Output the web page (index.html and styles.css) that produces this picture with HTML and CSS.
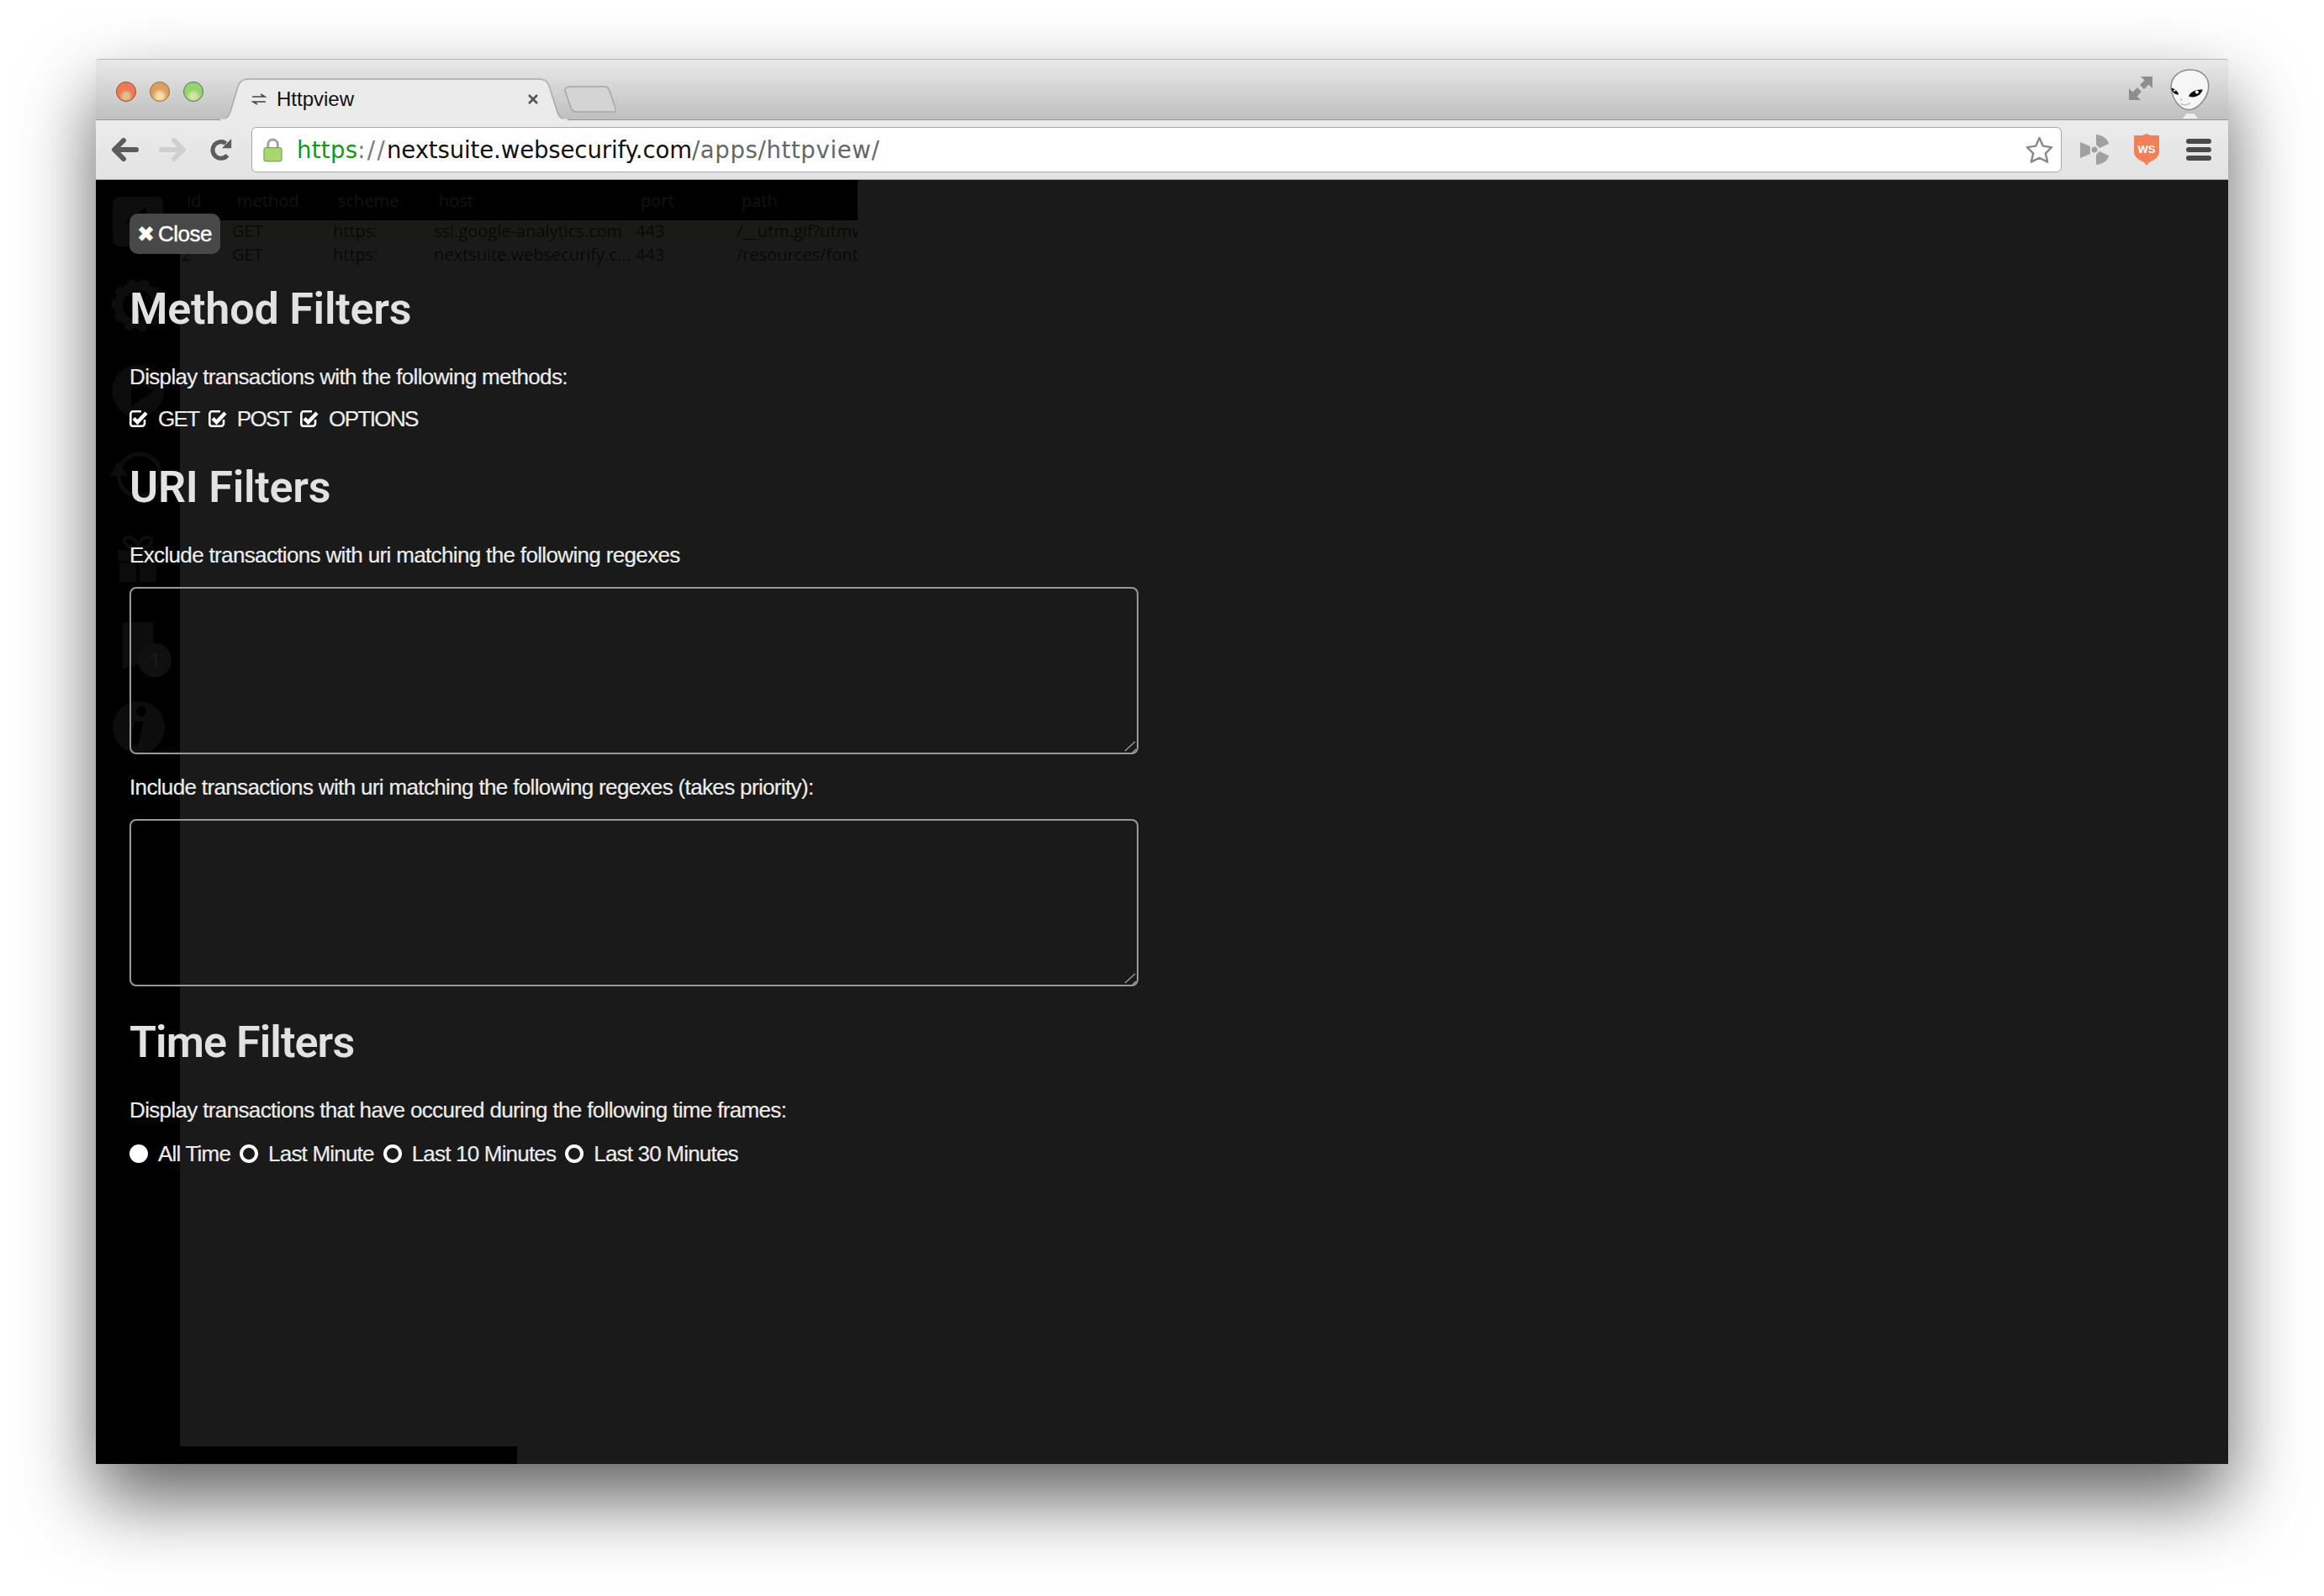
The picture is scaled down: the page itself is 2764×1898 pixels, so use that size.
FILE: index.html
```html
<!DOCTYPE html>
<html lang="en">
<head>
<meta charset="utf-8">
<title>Httpview</title>
<link rel="stylesheet" href="styles.css">
</head>
<body>
<div class="window">
  <header class="titlebar">
    <div class="lights">
      <span class="light light-red"></span>
      <span class="light light-amber"></span>
      <span class="light light-green"></span>
    </div>
    <div class="tabs">
      <div class="tab">
        <svg class="tab-shape" viewBox="0 0 415 50"><path d="M0 50C7 50 11 46 13 40L22 10C24 3 29 1 35 1H380C386 1 390 3 392 9L402 41C404 47 408 50 415 50Z" fill="#ebebeb" stroke="#a9a9a9" stroke-width="1.5"/><path d="M1 50H414" stroke="#ebebeb" stroke-width="3"/></svg>
        <svg class="tab-favicon" viewBox="0 0 18 14"><path d="M1 4H15M11 1L16 4H1M17 10H3M7 13L2 10H17" fill="none" stroke="#444" stroke-width="1.6"/></svg>
        <span class="tab-title">Httpview</span>
        <svg class="tab-close" viewBox="0 0 14 14"><path d="M2 2L12 12M12 2L2 12" stroke="#555" stroke-width="2.6"/></svg>
      </div>
      <svg class="new-tab" viewBox="0 0 64 32"><path d="M10 1H50C53 1 55 3 56 6L63 27C64 30 62 31 60 31H17C13 31 11 29 10 26L3 6C2 3 5 1 10 1Z" fill="#d4d4d4" stroke="#a5a5a5" stroke-width="1.4"/></svg>
    </div>
    <div class="title-right">
      <svg class="fullscreen" viewBox="0 0 28 28"><path d="M14 0H28V14L23.500 9.500L18 15L13 10L18.500 4.500ZM0 14V28H14L9.500 23.500L15 18L10 13L4.500 18.500Z" fill="#8e8e8e"/></svg>
      <svg class="alien" viewBox="0 0 50 62"><path d="M20 54L16 60H34L30 54Z" fill="#eee"/><path d="M25 1C39 1 48 10 47 23C46 34 36 47 26 49C20 50 13 47 8 40C3 33 1 24 2 18C4 8 13 1 25 1Z" fill="#f6f6f6" stroke="#8a8a8a" stroke-width="1.5"/><path d="M2 23C6 23 10 27 11 31C6 31 3 28 2 23Z" fill="#0c0c0c"/><path d="M40 25C34 24 25 27 23 33C30 36 38 32 40 25Z" fill="#0c0c0c"/><circle cx="33" cy="28" r="2" fill="#fff"/><circle cx="6" cy="26" r="1.200" fill="#fff"/><path d="M13 42C17 44 22 44 25 41" fill="none" stroke="#bbb" stroke-width="1.500"/><circle cx="14" cy="37" r="1.400" fill="#ccc"/></svg>
    </div>
  </header>
  <nav class="toolbar">
    <svg class="nav nav-back" viewBox="0 0 32 28"><path d="M14 3L3 14L14 25M4 14H29" fill="none" stroke="#5c5c5c" stroke-width="6" stroke-linecap="round" stroke-linejoin="round"/></svg>
    <svg class="nav nav-forward" viewBox="0 0 32 28"><path d="M18 3L29 14L18 25M28 14H3" fill="none" stroke="#cfcfcf" stroke-width="6" stroke-linecap="round" stroke-linejoin="round"/></svg>
    <svg class="nav nav-reload" viewBox="0 0 30 30"><path d="M23 22A10.500 10.500 0 1 1 21 7" fill="none" stroke="#5c5c5c" stroke-width="5.500"/><path d="M16 13L28 13L28 1Z" fill="#5c5c5c"/></svg>
    <div class="omnibox">
      <svg class="lock" viewBox="0 0 24 30"><path d="M6 13V8C6 4 9 2 12 2S18 4 18 8V13" fill="none" stroke="#a0a0a0" stroke-width="3"/><rect x="1" y="12" width="22" height="17" rx="2" fill="#a9d66e" stroke="#6f8f4b"/></svg>
      <span class="url"><span class="url-scheme">https</span><span class="url-sep">://</span><span class="url-host">nextsuite.websecurify.com</span><span class="url-path">/apps/httpview/</span></span>
      <svg class="star" viewBox="0 0 36 36"><path d="M18 3L22.500 13L33 14.500L25.500 22L28 32.500L18 27.500L8 32.500L10.500 22L3 14.500L13.500 13Z" fill="#fff" stroke="#8a8a8a" stroke-width="2.500" stroke-linejoin="round"/></svg>
    </div>
    <svg class="ext ext-radio" viewBox="0 0 36 38"><path d="M1 10L13 15V24L1 29ZM20 1C28 2 34 6 35 12L24 17L20 13ZM20 37C28 36 34 32 35 26L24 21L20 25Z" fill="#a0a0a0"/><circle cx="18" cy="19" r="3.500" fill="#a0a0a0"/></svg>
    <svg class="ext ext-ws" viewBox="0 0 32 38"><path d="M16 0L21 2H31V22C31 28 24 32 19 34L16 38L13 34C8 32 1 28 1 22V2H11Z" fill="#f08058"/><text class="ws-label" x="16" y="23" text-anchor="middle">WS</text></svg>
    <div class="menu"><span class="menu-bar"></span><span class="menu-bar"></span><span class="menu-bar"></span></div>
  </nav>
  <main class="content">
    <div class="ghost">
      <aside class="ghost-side">
        <svg class="ghost-icons" viewBox="0 0 100 700">
          <rect x="20" y="20" width="60" height="59" rx="8" fill="#0e0e0e"/><path d="M60 32L36 50L60 68Z" fill="#000"/>
          <circle cx="50" cy="149" r="23" fill="none" stroke="#0d0d0d" stroke-width="10"/><circle cx="50" cy="149" r="28" fill="none" stroke="#0d0d0d" stroke-width="7" stroke-dasharray="9 8"/>
          <circle cx="50" cy="251" r="31" fill="#0c0c0c"/><path d="M42 232L68 251L42 270Z" fill="#000"/>
          <circle cx="52" cy="351" r="25" fill="none" stroke="#0d0d0d" stroke-width="5"/><path d="M16 352L27 335L38 352Z" fill="#0d0d0d"/>
          <path d="M40 425C28 425 34 438 50 438C66 438 72 425 60 425C55 425 50 432 50 438C50 432 45 425 40 425Z" fill="none" stroke="#0d0d0d" stroke-width="4"/><rect x="26" y="440" width="48" height="13" fill="#0c0c0c"/><rect x="28" y="456" width="20" height="22" fill="#0c0c0c"/><rect x="52" y="456" width="20" height="22" fill="#0c0c0c"/>
          <path d="M32 526H68V566L50 576L32 582Z" fill="#0d0d0d"/>
          <circle cx="70" cy="571" r="20" fill="#101010"/><text class="ghost-badge" x="70" y="578" text-anchor="middle">1</text>
          <circle cx="51" cy="651" r="31" fill="#0d0d0d"/><path d="M54 626a6 6 0 1 1 -.01 0M46 644H57L50 672H41" fill="#000"/>
        </svg>
      </aside>
      <div class="ghost-main">
        <div class="ghost-table">
          <div class="ghost-head">
            <span class="gh-id">id</span><span class="gh-method">method</span><span class="gh-scheme">scheme</span><span class="gh-host">host</span><span class="gh-port">port</span><span class="gh-path">path</span>
          </div>
          <div class="ghost-row ghost-row-first">
            <span class="gc-id"></span><span class="gc-method">GET</span><span class="gc-scheme">https:</span><span class="gc-host">ssl.google-analytics.com</span><span class="gc-port">443</span><span class="gc-path">/__utm.gif?utmwv</span>
          </div>
          <div class="ghost-row">
            <span class="gc-id">2</span><span class="gc-method">GET</span><span class="gc-scheme">https:</span><span class="gc-host">nextsuite.websecurify.c...</span><span class="gc-port">443</span><span class="gc-path">/resources/fonts</span>
          </div>
        </div>
        <div class="ghost-footer"></div>
      </div>
    </div>
    <section class="panel">
      <button class="close-btn"><span class="close-x">✖</span>Close</button>
      <h2 class="heading heading-method">Method Filters</h2>
      <p class="copy copy-method">Display transactions with the following methods:</p>
      <div class="options options-method">
        <label class="option"><svg class="check" viewBox="0 0 22 20"><use href="#check-glyph"/></svg>GET</label>
        <label class="option"><svg class="check" viewBox="0 0 22 20"><use href="#check-glyph"/></svg>POST</label>
        <label class="option"><svg class="check" viewBox="0 0 22 20"><use href="#check-glyph"/></svg>OPTIONS</label>
      </div>
      <h2 class="heading heading-uri">URI Filters</h2>
      <p class="copy copy-exclude">Exclude transactions with uri matching the following regexes</p>
      <div class="regex-field">
        <textarea class="regex"></textarea>
        <svg class="grip" viewBox="0 0 18 18"><use href="#grip-glyph"/></svg>
      </div>
      <p class="copy copy-include">Include transactions with uri matching the following regexes (takes priority):</p>
      <div class="regex-field">
        <textarea class="regex"></textarea>
        <svg class="grip" viewBox="0 0 18 18"><use href="#grip-glyph"/></svg>
      </div>
      <h2 class="heading heading-time">Time Filters</h2>
      <p class="copy copy-time">Display transactions that have occured during the following time frames:</p>
      <div class="options options-time">
        <label class="option"><span class="radio radio-on"></span>All Time</label>
        <label class="option"><span class="radio"></span>Last Minute</label>
        <label class="option"><span class="radio"></span>Last 10 Minutes</label>
        <label class="option"><span class="radio"></span>Last 30 Minutes</label>
      </div>
    </section>
  </main>
</div>
<svg class="defs" width="0" height="0"><defs>
  <g id="check-glyph"><path d="M18 11V15.500C18 17.500 16.500 18.700 15 18.700H4C2.500 18.700 1.300 17.500 1.300 15.500V4.500C1.300 2.700 2.500 1.300 4 1.300H14" fill="none" stroke="#fff" stroke-width="2.600"/><path d="M5 9.500L9.500 14L20 3" fill="none" stroke="#fff" stroke-width="4.400"/></g>
  <g id="grip-glyph"><path d="M2 14L14 3M10 17L15 12" stroke="#999" stroke-width="1.500"/></g>
</defs></svg>
</body>
</html>
```
FILE: styles.css
```css
* { box-sizing: border-box; }
html, body { margin: 0; height: 100%; background: #fff; overflow: hidden; }
body { padding: 70px 114px 0; font-family: "Liberation Sans", Arial, sans-serif; }
.defs { position: absolute; }

.window { height: 1671px; display: flex; flex-direction: column; box-shadow: 0 42px 88px rgba(0,0,0,.62); border-radius: 4px 4px 0 0; }

.titlebar { height: 73px; flex: none; display: flex; align-items: flex-start; background: linear-gradient(#e9e9e9, #bfbfbf); border-top: 1px solid #b5b5b5; border-bottom: 1px solid #979797; border-radius: 4px 4px 0 0; }
.lights { display: flex; gap: 16px; padding: 26px 0 0 24px; width: 159px; flex: none; }
.light { width: 24px; height: 24px; border-radius: 50%; border: 1px solid #7a5a3a; }
.light-red { background: radial-gradient(circle at 50% 75%, #dcc08e 0 18%, #ef7a58 40%); border-color: #9a4a22; }
.light-amber { background: radial-gradient(circle at 50% 75%, #f4dda6 0 18%, #dba060 45%); border-color: #9c6a2c; }
.light-green { background: radial-gradient(circle at 50% 75%, #dfe0a8 0 15%, #92d66c 42%); border-color: #5f6a5a; }

.tabs { display: flex; align-items: flex-start; padding-top: 22px; flex: none; }
.tab { position: relative; width: 415px; height: 50px; margin-left: -12px; display: flex; align-items: center; padding-left: 38px; z-index: 1; }
.tab-shape { position: absolute; inset: 0; width: 100%; height: 100%; overflow: visible; }
.tab-favicon { position: relative; width: 18px; height: 14px; margin-right: 12px; flex: none; }
.tab-title { position: relative; font-size: 24px; color: #111; width: 298px; flex: none; }
.tab-close { position: relative; width: 14px; height: 14px; flex: none; }
.new-tab { width: 64px; height: 32px; margin: 9px 0 0 -7px; }
.title-right { margin-left: auto; display: flex; align-items: flex-start; }
.fullscreen { width: 28px; height: 28px; margin: 20px 20px 0 0; }
.alien { width: 50px; height: 61px; margin: 11px 20px 0 0; overflow: hidden; }

.toolbar { height: 71px; flex: none; display: flex; align-items: center; background: linear-gradient(#ebebeb, #e3e3e3); border-bottom: 1px solid #a5a5a5; padding: 0 20px 0 19px; }
.nav { width: 32px; height: 28px; flex: none; }
.nav-forward { margin-left: 24px; }
.nav-reload { width: 28px; height: 28px; margin-left: 28px; }
.omnibox { flex: 1; height: 54px; margin: 0 21px 0 22px; background: #fff; border: 1px solid #a8a8a8; border-radius: 6px; display: flex; align-items: center; padding: 0 8px 0 13px; min-width: 0; }
.lock { width: 23px; height: 29px; flex: none; margin-right: 17px; }
.url { flex: 1; font-family: "DejaVu Sans", sans-serif; font-size: 27.500px; white-space: nowrap; }
.url-scheme { color: #0f9a0f; letter-spacing: .3px; }
.url-sep { color: #778; letter-spacing: 2.300px; }
.url-host { color: #111; letter-spacing: -.1px; }
.url-path { color: #666; letter-spacing: .65px; }
.star { width: 35px; height: 35px; flex: none; }
.ext { flex: none; }
.ext-radio { width: 36px; height: 38px; }
.ext-ws { width: 32px; height: 38px; margin-left: 28px; }
.ws-label { font: 700 13px "Liberation Sans", sans-serif; fill: #fff; }
.menu { margin-left: 31px; width: 30px; display: flex; flex-direction: column; gap: 4px; }
.menu-bar { height: 6px; border-radius: 3px; background: #4a4a4a; }

.content { flex: 1; position: relative; min-height: 0; background: #000; overflow: hidden; }
.ghost { position: absolute; inset: 0; display: flex; }
.ghost-side { width: 100px; flex: none; background: #000; }
.ghost-icons { display: block; width: 100px; height: 700px; }
.ghost-badge { font: 700 22px "Open Sans", sans-serif; fill: #181818; }
.ghost-main { flex: 1; background: #1a1a1a; display: flex; flex-direction: column; justify-content: space-between; min-width: 0; }
.ghost-table { width: 806px; overflow: hidden; font-family: "Open Sans", sans-serif; font-size: 20px; white-space: nowrap; }
.ghost-head { height: 48px; background: #000; display: grid; grid-template-columns: 60px 120px 120px 240px 120px 146px; align-items: center; color: #131313; }
.ghost-head span { padding-left: 8px; }
.ghost-row { height: 28px; padding: 0 0 3px 2px; display: grid; grid-template-columns: 60px 120px 120px 240px 120px 146px; align-items: center; color: #090909; overflow: hidden; }
.ghost-row-first { background: #1a1a18; }
.ghost-row span { overflow: hidden; }
.ghost-footer { width: 401px; height: 21px; background: #000; }

.panel { position: absolute; inset: 0; padding: 40px 0 0 40px; color: #fff; }
.close-btn { display: flex; align-items: center; height: 48px; width: 108px; padding: 0 0 0 9px; border: 0; border-radius: 10px; background: #484848; color: #fff; font: 26px "Liberation Sans", sans-serif; letter-spacing: -.5px; -webkit-text-stroke: .4px #fff; }
.close-x { font-size: 25px; margin-right: 4px; font-family: "DejaVu Sans", sans-serif; letter-spacing: 0; }
.heading { margin: 0; font-family: Roboto, sans-serif; font-weight: 600; font-size: 52px; line-height: 60px; color: #e2e2e2; letter-spacing: -.2px; }
.heading-method { margin-top: 36px; }
.heading-uri { margin-top: 37px; }
.heading-time { margin-top: 37px; letter-spacing: -.9px; }
.copy { margin: 0; font-size: 26px; line-height: 30px; color: #ececec; letter-spacing: -.65px; -webkit-text-stroke: .2px #ececec; }
.copy-method { margin-top: 35px; }
.copy-exclude { margin-top: 35px; }
.copy-include { margin-top: 24px; }
.copy-time { margin-top: 35px; }
.options { display: flex; gap: 11px; font-size: 26px; line-height: 30px; color: #ececec; -webkit-text-stroke: .2px #ececec; }
.options-method { margin-top: 20px; letter-spacing: -1.6px; }
.options-time { margin-top: 22px; letter-spacing: -.8px; }
.option { display: flex; align-items: center; gap: 12px; }
.check { width: 22px; height: 20px; flex: none; }
.radio { width: 22px; height: 22px; flex: none; border-radius: 50%; border: 4.500px solid #fff; }
.radio-on { background: #fff; }
.regex-field { position: relative; width: 1200px; height: 199px; margin-top: 23px; }
.regex { display: block; width: 100%; height: 100%; background: transparent; border: 2px solid #999; border-radius: 8px; color: #fff; resize: none; }
.grip { position: absolute; right: 0; bottom: 0; width: 18px; height: 18px; }
```
